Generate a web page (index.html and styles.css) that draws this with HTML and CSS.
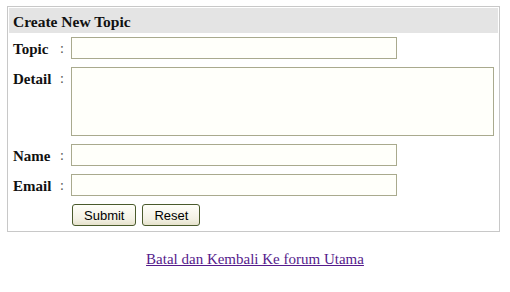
FILE: index.html
```html
<!DOCTYPE html>
<html lang="id">
<head>
    <meta charset="UTF-8">
    <title>Create New Topic</title>
    <link rel="stylesheet" href="styles.css">
</head>
<body>
    <!-- form topik baru -->
    <form class="topic-box">
        <div class="topic-head">Create New Topic</div>
        <div class="topic-form">
            <label class="lbl" for="topic">Topic</label>
            <span class="colon">:</span>
            <input type="text" id="topic" class="field">

            <label class="lbl" for="detail">Detail</label>
            <span class="colon">:</span>
            <textarea id="detail" class="field area"></textarea>

            <label class="lbl" for="name">Name</label>
            <span class="colon">:</span>
            <input type="text" id="name" class="field">

            <label class="lbl" for="email">Email</label>
            <span class="colon">:</span>
            <input type="text" id="email" class="field">

            <span></span>
            <span></span>
            <div class="buttons">
                <button type="button" class="btn">Submit</button>
                <button type="reset" class="btn">Reset</button>
            </div>
        </div>
    </form>

    <p class="back"><a href="#">Batal dan Kembali Ke forum Utama</a></p>
</body>
</html>
```

FILE: styles.css
```css
body {
    margin: 0;
    background: #fff;
    font-family: "Liberation Serif", serif;
}
.topic-box {
    width: 489px;
    margin: 6px 0 0 7px;
    border: 1px solid #c8c8c8;
    padding: 1px;
}
.topic-head {
    background-color: #e4e4e4;
    height: 25px;
    line-height: 27px;
    padding-left: 4px;
    font-weight: bold;
    font-size: 15.5px;
    color: #111;
}
.topic-form {
    display: grid;
    grid-template-columns: 47px 11px 1fr;
    row-gap: 8px;
    padding: 4px 0 4px 4px;
    align-items: start;
}
.lbl {
    font-weight: bold;
    font-size: 15px;
    line-height: 20px;
    padding-top: 2px;
    color: #111;
}
.colon {
    font-size: 14px;
    line-height: 20px;
    padding-top: 2px;
    color: #555;
}
.field {
    width: 326px;
    height: 22px;
    box-sizing: border-box;
    border: 1px solid #a9aa8e;
    background-color: #fffffa;
    margin: 0;
    padding: 1px 3px;
    font-family: "Liberation Sans", sans-serif;
    font-size: 13px;
}
.area {
    width: 423px;
    height: 69px;
    resize: none;
    display: block;
}
.buttons {
    display: flex;
    gap: 6px;
    padding-left: 1px;
}
.btn {
    height: 22px;
    box-sizing: border-box;
    padding: 0 11px;
    border: 1px solid #4a5a2c;
    border-radius: 3px;
    background: linear-gradient(#fffffa, #f3f1e4 70%, #e6e2cc);
    font-family: "Liberation Sans", sans-serif;
    font-size: 13px;
    color: #000;
}
.back {
    margin: 19px 0 0;
    text-align: center;
    font-size: 15px;
}
.back a {
    color: #551a8b;
}
```
